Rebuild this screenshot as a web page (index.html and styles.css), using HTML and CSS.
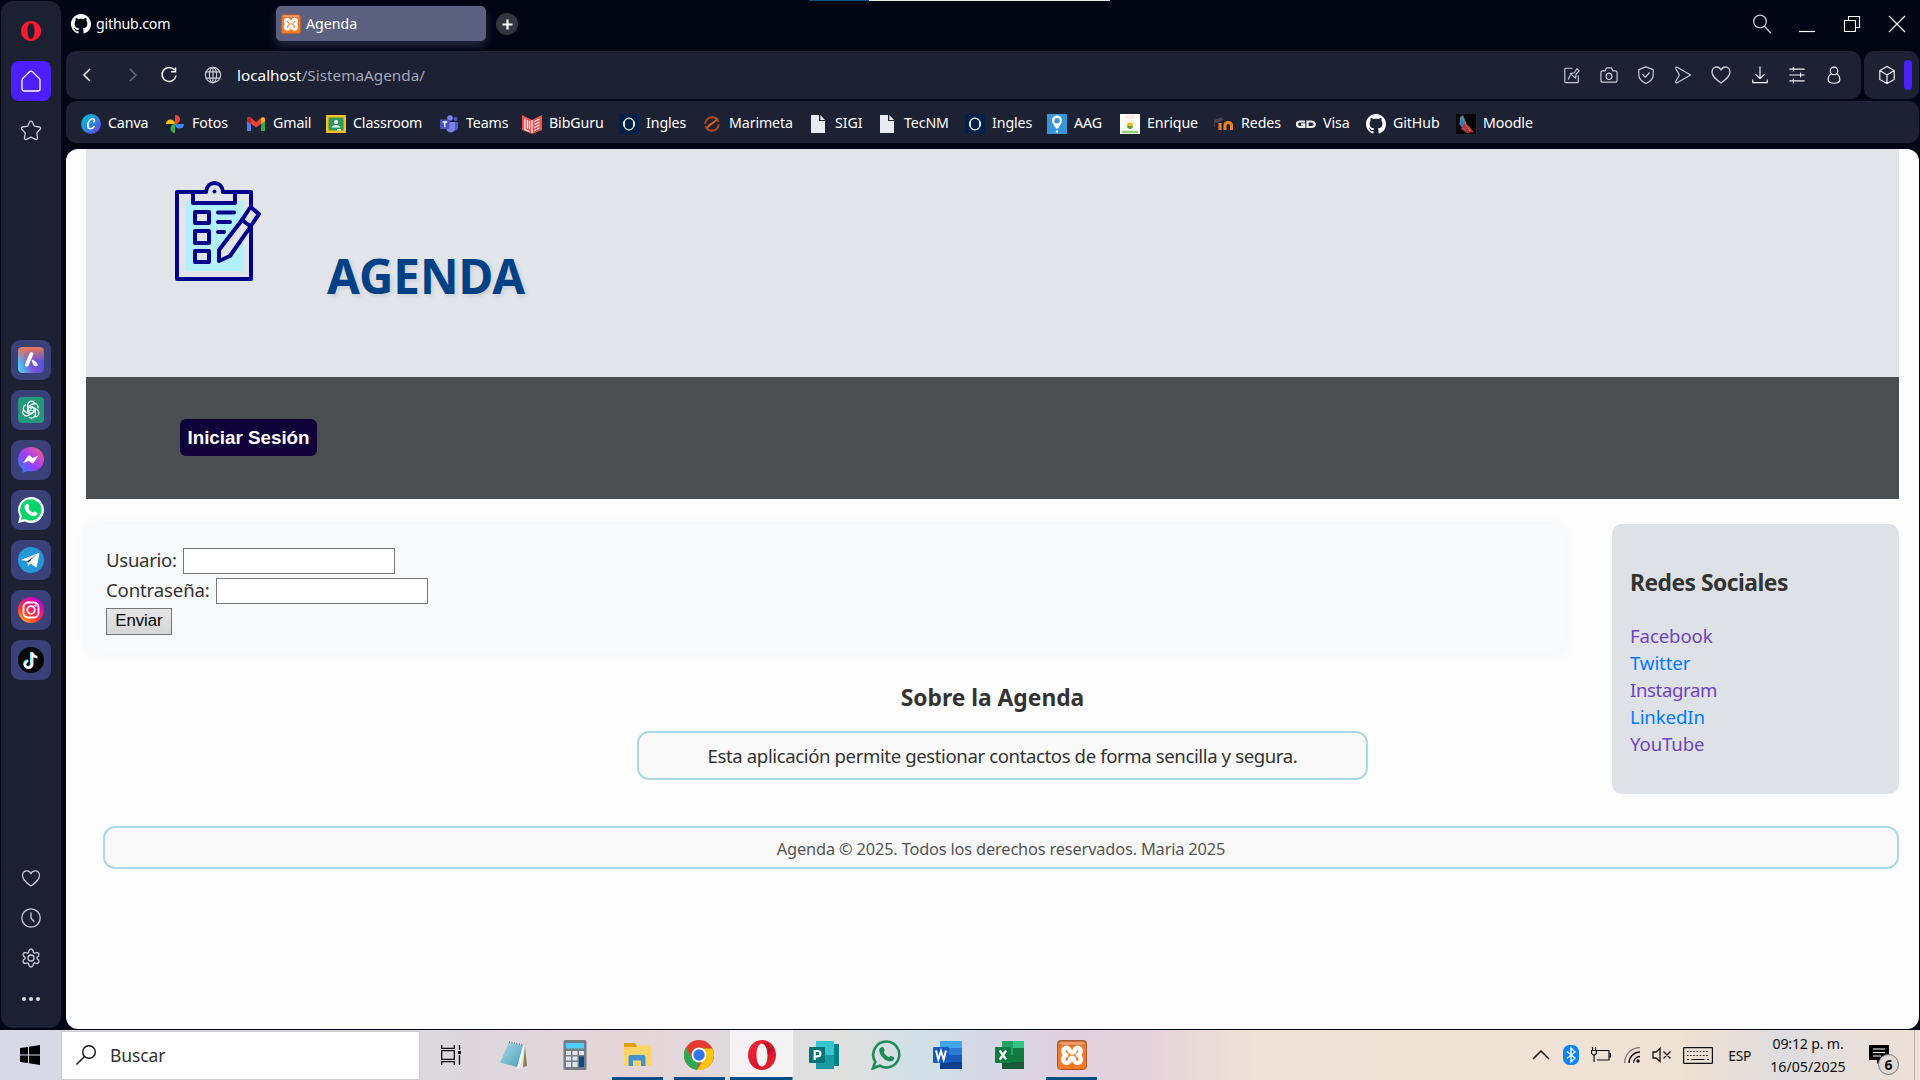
FILE: index.html
```html
<!DOCTYPE html>
<html lang="es">
<head>
<meta charset="utf-8">
<title>Agenda</title>
<link rel="stylesheet" href="styles.css">
</head>
<body>
<svg class="defs" width="0" height="0" aria-hidden="true">
  <defs>
    <linearGradient id="gCanva" x1="0" y1="0" x2="1" y2="1"><stop offset="0" stop-color="#00c4cc"/><stop offset=".5" stop-color="#2a8de0"/><stop offset="1" stop-color="#7d2ae8"/></linearGradient>
    <linearGradient id="gAria" x1="0" y1=".7" x2="1" y2=".4"><stop offset="0" stop-color="#4fd0f0"/><stop offset=".5" stop-color="#7a4fd8"/><stop offset="1" stop-color="#4a56d8"/></linearGradient>
    <linearGradient id="gAriaTop" x1="0" y1="0" x2="0" y2="1"><stop offset="0" stop-color="#ee7a50"/><stop offset=".55" stop-color="#ee7a50" stop-opacity="0"/></linearGradient>
    <linearGradient id="gMess" x1="0" y1="1" x2="1" y2="0"><stop offset="0" stop-color="#1a8cff"/><stop offset=".45" stop-color="#9a3cff"/><stop offset="1" stop-color="#ff5f80"/></linearGradient>
    <linearGradient id="gInsta" x1="0" y1="1" x2=".7" y2="0"><stop offset="0" stop-color="#ffd521"/><stop offset=".4" stop-color="#ff3d2e"/><stop offset=".7" stop-color="#f0108a"/><stop offset="1" stop-color="#b900d8"/></linearGradient>
    <linearGradient id="gOpera" x1="0" y1="0" x2="1" y2="1"><stop offset="0" stop-color="#ff2a3c"/><stop offset=".6" stop-color="#d3122a"/><stop offset="1" stop-color="#f0303c"/></linearGradient>
    <linearGradient id="gXampp" x1="0" y1="0" x2="0" y2="1"><stop offset="0" stop-color="#b9602a"/><stop offset=".25" stop-color="#f07c2c"/><stop offset="1" stop-color="#fb7a24"/></linearGradient>
    <linearGradient id="gNote" x1="0" y1="0" x2="1" y2="1"><stop offset="0" stop-color="#a9dbe8"/><stop offset="1" stop-color="#4a9db8"/></linearGradient>
    <symbol id="github" viewBox="0 0 16 16"><path fill="#fff" d="M8 0C3.58 0 0 3.58 0 8c0 3.54 2.29 6.53 5.47 7.59.4.07.55-.17.55-.38 0-.19-.01-.82-.01-1.49-2.01.37-2.53-.49-2.69-.94-.09-.23-.48-.94-.82-1.13-.28-.15-.68-.52-.01-.53.63-.01 1.08.58 1.23.82.72 1.21 1.87.87 2.33.66.07-.52.28-.87.51-1.07-1.78-.2-3.64-.89-3.64-3.95 0-.87.31-1.59.82-2.15-.08-.2-.36-1.02.08-2.12 0 0 .67-.21 2.2.82.64-.18 1.32-.27 2-.27s1.36.09 2 .27c1.53-1.04 2.2-.82 2.2-.82.44 1.1.16 1.92.08 2.12.51.56.82 1.27.82 2.15 0 3.07-1.87 3.75-3.65 3.95.29.25.54.73.54 1.48 0 1.07-.01 1.93-.01 2.2 0 .21.15.46.55.38A8.01 8.01 0 0 0 16 8c0-4.42-3.58-8-8-8z"/></symbol>
    <symbol id="xampp" viewBox="0 0 30 30"><rect x=".5" y=".5" width="29" height="29" rx="3" fill="url(#gXampp)" stroke="#a85a2c"/><rect x="2.5" y="1.8" width="25" height="3" rx="1.5" fill="#f6b48c" opacity=".7"/><path fill="none" stroke="#fff" stroke-width="4.400" stroke-linejoin="round" stroke-linecap="round" d="M12.500 10.500C12 8 9.500 7.200 7.800 8.400 5.600 10 6 13.600 9.200 15 5.800 16.400 5.400 20.600 7.600 22.200c2 1.400 4.600.6 5.400-1.800l.4-2q1.600-1.400 3.200 0l.4 2c.8 2.400 3.400 3.200 5.400 1.800 2.200-1.600 1.800-5.800-1.600-7.200 3.200-1.400 3.600-5 1.400-6.600-1.700-1.200-4.200-.4-4.700 2.100l-.3 1.300q-1.800 1.400-3.600 0z"/></symbol>
    <symbol id="heart" viewBox="0 0 20 20"><path d="M10 18C4 13.500 1 10.800 1 6.900 1 4 3 2 5.500 2 7.500 2 9.200 3.200 10 5c.8-1.800 2.500-3 4.500-3C17 2 19 4 19 6.900c0 3.900-3 6.600-9 11.100z"/></symbol>
    <symbol id="oxford" viewBox="0 0 20 20"><rect width="20" height="20" fill="#002147"/><ellipse cx="10" cy="10" rx="5.300" ry="5.900" fill="none" stroke="#fff" stroke-width="1.100"/><path d="M5.100 7.500v5M14.900 7.500v5" stroke="#fff" stroke-width="1.400"/></symbol>
    <symbol id="file" viewBox="0 0 20 20"><path fill="#e8ebf0" d="M3 1h8v6h6v12H3zM12.300 1 17 6h-4.700z"/></symbol>
  </defs>
</svg>

<div class="browser">
  <nav class="rail">
    <a class="cell"><svg width="20" height="22" viewBox="0 0 20 22"><path fill="#ff1b2d" fill-rule="evenodd" d="M10 1C4.500 1 0 5.500 0 11s4.500 10 10 10 10-4.500 10-10S15.500 1 10 1zm0 2.200c2.300 0 3.600 3.500 3.600 7.800s-1.300 7.800-3.600 7.800S6.400 15.300 6.400 11 7.700 3.200 10 3.200z"/></svg></a>
    <a class="cell home"><svg class="line" width="20" height="22" viewBox="0 0 20 22"><path d="M1 10.500c0-1 .4-1.800 1-2.400L8.500 1.700c.9-.9 2.100-.9 3 0L18 8.100c.6.6 1 1.400 1 2.400V19c0 1-.8 2-2 2H3c-1.200 0-2-1-2-2z"/></svg></a>
    <a class="cell star"><svg class="line" width="22" height="22" viewBox="0 0 22 22"><path d="M9.800 1.800c.5-1 1.900-1 2.400 0l2.200 4.400 5 .8c1.200.2 1.600 1.500.8 2.300l-3.400 3.600.7 5c.2 1.200-1 2-2 1.500L11 17.200l-4.500 2.200c-1 .5-2.200-.3-2-1.500l.7-5L1.800 9.300C1 8.500 1.400 7.200 2.600 7l5-.8z"/></svg></a>
    <div class="apps">
      <a class="cell tile"><svg width="26" height="26" viewBox="0 0 26 26"><rect width="26" height="26" rx="4.500" fill="url(#gAria)"/><rect width="26" height="26" rx="4.500" fill="url(#gAriaTop)"/><path fill="#fff" d="M12 5.500c1.500-.8 3.400-.2 3.400 1.500L10.600 18.300c-.8 2.200-4.600 1.200-3.600-1.300zM13.500 12.500c3 .3 5.800 3 6.300 6-2 1.500-4 .8-4.800-1.200z"/></svg></a>
      <a class="cell tile"><svg width="26" height="26" viewBox="0 0 26 26"><rect width="26" height="26" rx="4" fill="#22997b"/><g fill="none" stroke="#fff" stroke-width="1.200"><g id="petal"><path d="M9.700 15V8.300c0-4.600 5.600-5.300 7.100-2M10.200 9.600l4.200-2.500c3-1.600 6.300.8 5.700 4.300M13 9.300V12.800"/></g><use href="#petal" transform="rotate(120 13 13)"/><use href="#petal" transform="rotate(240 13 13)"/><path d="m13 9.600 3 1.700v3.400l-3 1.700-3-1.700v-3.400z"/></g></svg></a>
      <a class="cell tile"><svg width="26" height="26" viewBox="0 0 26 26"><path fill="url(#gMess)" d="M13 0c7.300 0 13 5.300 13 12.300S20.300 24.600 13 24.600c-1.300 0-2.600-.2-3.700-.5L4.500 26v-4C1.700 19.800 0 16.300 0 12.300 0 5.300 5.700 0 13 0z"/><path fill="#fff" d="m5 16 4.800-6.700c.7-.8 1.600-.9 2.400-.3l2.600 2 5.800-2.400-4.700 6.900c-.7.900-1.600 1-2.400.4l-2.600-2z"/></svg></a>
      <a class="cell tile"><svg width="26" height="26" viewBox="0 0 26 26"><path fill="#fff" d="M13 0a13 13 0 1 1-6.300 24.400L0 26l1.700-6.600A13 13 0 0 1 13 0z"/><path fill="#08d46c" d="M13 2.200A10.700 10.700 0 0 0 4 19l-1 4 4-1.100A10.700 10.700 0 1 0 13 2.200z"/><path fill="#fff" d="M8 7.500c1-1.200 2-1 2.500.2l.8 1.900c.3.700-.9 1.500-.7 2 1 1.900 2.300 3.200 4.200 4 .6.200 1.300-1.400 1.900-1.100l2.300 1.200c1.100.6-.4 3.500-3.200 3.500-4.500-.2-9.700-5.600-9.200-9.800.1-.8.800-1.400 1.400-1.900z"/></svg></a>
      <a class="cell tile"><svg width="26" height="26" viewBox="0 0 26 26"><circle cx="13" cy="13" r="13" fill="#2497d8"/><path fill="#fff" d="M3 13 20.500 6.100c.7-.2 1 .2.900.9l-2.600 12.500c-.2.900-.9 1-1.600.5l-4.700-3.500-2.500 2.600-1-5z"/><path stroke="#b8d8ea" d="m9 14 9-6-7.500 8"/></svg></a>
      <a class="cell tile"><svg width="26" height="26" viewBox="0 0 26 26"><circle cx="13" cy="13" r="13" fill="url(#gInsta)"/><g fill="none" stroke="#fff" stroke-width="1.800"><rect x="5.500" y="5.500" width="15" height="15" rx="4.500"/><circle cx="13" cy="13" r="3.800"/></g><circle cx="17.300" cy="8.700" r="1.100" fill="#fff"/></svg></a>
      <a class="cell tile"><svg width="26" height="26" viewBox="0 0 26 26"><circle cx="13" cy="13" r="13" fill="#05060a"/><g fill="none" stroke-width="2.500"><path stroke="#25f4ee" d="M13.200 5v12a3.400 3.400 0 1 1-3.500-3.500"/><path stroke="#fe2c55" d="M14.600 6.200v12a3.400 3.400 0 0 1-5 2M15 6c.5 2.700 2 4.200 5 4.600"/><path stroke="#fff" d="M13.900 5.500v12a3.400 3.400 0 1 1-3.500-3.500M14 5.500c.5 2.700 2 4.200 5 4.600"/></g></svg></a>
    </div>
    <div class="tools">
      <a class="cell"><svg class="line" width="20" height="19" viewBox="0 0 20 20"><use href="#heart"/></svg></a>
      <a class="cell"><svg class="line" width="20" height="20" viewBox="0 0 20 20"><circle cx="10" cy="10" r="9.200"/><path d="M10 5v5l3 3.500"/></svg></a>
      <a class="cell"><svg class="line" width="20" height="20" viewBox="0 0 20 20"><path d="M8 2.400Q10-.4 12 2.400l.4 2.100 1.200.7 2-.7q3.300.4 2 3.400L16 9.300v1.400l1.600 1.400q1.300 3-2 3.400l-2-.7-1.200.7-.4 2.100q-2 2.800-4 0l-.4-2.100-1.200-.7-2 .7q-3.300-.4-2-3.400L4 10.700V9.300L2.400 7.900q-1.300-3 2-3.400l2 .7 1.200-.7z"/><circle cx="10" cy="10" r="3"/></svg></a>
      <a class="cell dots"><svg width="20" height="6" viewBox="0 0 20 6" fill="#d5d8e0"><circle cx="3" cy="3" r="2.100"/><circle cx="10" cy="3" r="2.100"/><circle cx="17" cy="3" r="2.100"/></svg></a>
    </div>
  </nav>

  <div class="main">
    <div class="tabs">
      <div class="tab"><svg width="20" height="20"><use href="#github"/></svg><span class="label">github.com</span></div>
      <div class="tab active"><svg width="20" height="20"><use href="#xampp"/></svg><span>Agenda</span></div>
      <div class="plus"><svg width="11" height="11" viewBox="0 0 11 11"><path d="M5.500.5v10M.5 5.500h10" stroke="#fff" stroke-width="2.200"/></svg></div>
      <div class="window">
        <svg class="line" width="20" height="20" viewBox="0 0 20 20"><circle cx="8" cy="7.500" r="6.300"/><path d="m12.300 12.200 6.200 6.500"/></svg>
        <svg width="20" height="20" viewBox="0 0 20 20"><path d="M2 17.500h16" stroke="#fff" stroke-width="1.200"/></svg>
        <svg width="20" height="20" viewBox="0 0 20 20" fill="none" stroke="#fff" stroke-width="1.100"><path d="M2.500 6.500h11v11h-11zM6.500 6.500v-4h11v11h-4"/></svg>
        <svg width="20" height="20" viewBox="0 0 20 20"><path d="m2 2 16 16M18 2 2 18" stroke="#fff" stroke-width="1.200"/></svg>
      </div>
    </div>

    <div class="bar">
      <div class="address">
        <div class="nav">
          <svg width="20" height="20" viewBox="0 0 20 20" fill="none" stroke="#fff" stroke-width="1.500"><path d="m13 4-6 6 6 6"/></svg>
          <svg width="20" height="20" viewBox="0 0 20 20" fill="none" stroke="#666a7a" stroke-width="1.500"><path d="m7 4 6 6-6 6"/></svg>
          <svg width="20" height="20" viewBox="0 0 20 20" fill="none" stroke="#fff" stroke-width="1.500"><path d="M15.500 5A7 7 0 1 0 17 10.500M16.500 2.500v4.300h-4.300"/></svg>
          <svg class="line" width="18" height="18" viewBox="0 0 20 20"><circle cx="10" cy="10" r="8.500"/><ellipse cx="10" cy="10" rx="4" ry="8.500"/><path d="M2.500 6.500h15M2.500 13.500h15M10 1.500v17"/></svg>
        </div>
        <span class="url"><b>localhost</b>/SistemaAgenda/</span>
        <div class="actions">
          <svg class="line" width="18" height="18" viewBox="0 0 20 20"><path d="M10 2.500H3q-1 0-1 1v14q0 1 1 1h13q1 0 1-1V11M6 14.500l2-4M8 8.500l4.500-1 3-4.500 2.500 2.500-3.500 3.500-.5 4.500zM12 3"/></svg>
          <svg class="line" width="18" height="18" viewBox="0 0 20 20"><path d="M3 5.500h2.500l2-3.500h5l2 3.500H17q2 0 2 2v8q0 2.500-2 2.500H3q-2 0-2-2.500v-8q0-2 2-2z"/><ellipse cx="10" cy="11.500" rx="3.200" ry="3.500"/></svg>
          <svg class="line" width="18" height="18" viewBox="0 0 20 20"><path d="m10 1 8 3v6c0 4.500-3.500 7.500-8 9.500-4.500-2-8-5-8-9.500V4z"/><path d="m6.500 9.500 2.700 3 4.500-5"/></svg>
          <svg class="line" width="18" height="18" viewBox="0 0 20 20"><path d="M3.500 1.500 18.500 10l-15 8.500c-1.500.8-2-.5-1.500-1.500L6 10 2 3c-.5-1 .3-2.200 1.500-1.500z"/></svg>
          <svg class="line" width="20" height="20" viewBox="0 0 20 20"><use href="#heart"/></svg>
          <svg class="line bright" width="18" height="18" viewBox="0 0 20 20"><path d="M10 1v13M5.500 9.500 10 14l4.500-4.500M2 15.500v3h16v-3"/></svg>
          <svg class="line bright" width="18" height="18" viewBox="0 0 20 20"><path d="M2 3.500h16M2 10h16M2 16.500h16M6 1.500v4M14 8v4M6 14.500v4"/></svg>
          <svg class="line bright" width="18" height="18" viewBox="0 0 20 20"><circle cx="10" cy="5.500" r="4.200"/><path d="M7.300 8.700C4.700 10 3.500 12 3.500 15c0 5.500 13 5.500 13 0 0-3-1.200-5-3.800-6.300"/></svg>
        </div>
      </div>
      <div class="panel">
        <svg class="line bright" width="18" height="20" viewBox="0 0 20 22"><path d="M10 1.500 18 6v10l-8 4.500L2 16V6zM2 6l8 5 8-5M10 11v9.500"/></svg>
        <i></i>
      </div>
    </div>

    <div class="bookmarks">
      <a><svg width="20" height="20" viewBox="0 0 20 20"><circle cx="10" cy="10" r="10" fill="url(#gCanva)"/><path fill="none" stroke="#fff" stroke-width="1.600" stroke-linecap="round" d="M12.800 8c1-1.300.6-3.200-1.200-3.200-2.600 0-4.800 3.400-4.800 6.400 0 2.300 1 3.600 2.700 3.600 1.500 0 2.800-.9 3.700-2.300"/></svg><span>Canva</span></a>
      <a><svg width="20" height="20" viewBox="0 0 20 20"><path fill="#ea4335" d="M10 10V1c3 0 5 2 5 4.500S13 10 10 10z"/><path fill="#4285f4" d="M10 10h9c0 3-2 4.500-4.500 4.500S10 13 10 10z"/><path fill="#34a853" d="M10 10v9c-3 0-4.500-2-4.500-4.500S7 10 10 10z"/><path fill="#fbbc04" d="M10 10H1c0-3 2-4.500 4.500-4.500S10 7 10 10z"/></svg><span>Fotos</span></a>
      <a><svg width="20" height="20" viewBox="0 0 20 20"><path fill="#4285f4" d="M1 5v12h4V8z"/><path fill="#34a853" d="M15 8v9h4V5z"/><path fill="#ea4335" d="M1 5c0-2 2-2.500 3.500-1.500L10 8l5.500-4.500C17 2.500 19 3 19 5v2l-9 6.500L1 7z"/><path fill="#fbbc04" d="M15 4.500c2-2 4-.5 4 1V7l-4 3z"/><path fill="#c5221f" d="M5 4.500C3 2.500 1 4 1 5.500V7l4 3z"/></svg><span>Gmail</span></a>
      <a><svg width="20" height="20" viewBox="0 0 20 20"><rect y="1" width="20" height="18" rx="1" fill="#f7bc1b"/><rect x="2.500" y="3.500" width="15" height="13" fill="#2b9a5c"/><circle cx="10" cy="8" r="2" fill="#fff"/><path fill="#fff" d="M5.500 13.500c1-3.500 8-3.500 9 0zM11 15h4v1.500h-4z"/></svg><span>Classroom</span></a>
      <a><svg width="20" height="20" viewBox="0 0 20 20"><circle cx="16.500" cy="5" r="2" fill="#5059c9"/><circle cx="11" cy="4" r="2.800" fill="#7b83eb"/><path fill="#5059c9" d="M13 8h6v5c0 3-2 4-4 3.500z"/><path fill="#7b83eb" d="M7 8h9v6c0 6-8 6-9 0z"/><rect x="1" y="5.500" width="9.500" height="9.500" rx="1" fill="#4b53bc"/><path stroke="#fff" stroke-width="1.300" d="M3.500 8h4.600M5.800 8v5"/></svg><span>Teams</span></a>
      <a><svg width="20" height="20" viewBox="0 0 20 20"><path fill="#f0504e" d="m0 1 10 5 10-5v15l-10 4-10-4z"/><path stroke="#fff" stroke-width="1.200" fill="none" d="M3 4.500v11l4.500 2M5.500 6v8.500M7.500 7v8M10 6v13M12.500 7.500l5-2.500M12.500 10.500l5-2.500M12.500 13.500l5-2.500M12.500 16.500l5-2.500"/></svg><span>BibGuru</span></a>
      <a><svg width="20" height="20"><use href="#oxford"/></svg><span>Ingles</span></a>
      <a><svg width="20" height="20" viewBox="0 0 20 20"><circle cx="10" cy="10" r="6.800" fill="none" stroke="#a8481c" stroke-width="2" stroke-dasharray="19 2.300"/><path fill="#e0601c" d="M5 15.500c0-3 .5-4.500 3-6l4-2.500 4-3.500c-1 3-2 5-5 6.500l-3 2z"/></svg><span>Marimeta</span></a>
      <a><svg width="20" height="20"><use href="#file"/></svg><span>SIGI</span></a>
      <a><svg width="20" height="20"><use href="#file"/></svg><span>TecNM</span></a>
      <a><svg width="20" height="20"><use href="#oxford"/></svg><span>Ingles</span></a>
      <a><svg width="20" height="20" viewBox="0 0 20 20"><rect width="20" height="20" fill="#3596d8"/><path fill="#fff" fill-rule="evenodd" d="M10 1.500c3 0 5 2.200 5 5 0 3-2.600 5-4 8H9c-1.400-3-4-5-4-8 0-2.800 2-5 5-5zm0 2.500a2.700 2.700 0 1 0 0 5.400A2.700 2.700 0 0 0 10 4z"/><circle cx="10" cy="17.500" r="1.200" fill="#fff"/></svg><span>AAG</span></a>
      <a><svg width="20" height="20" viewBox="0 0 20 20"><rect width="20" height="20" fill="#fff"/><path stroke="#fbe4e1" stroke-width="1.500" d="M5 2h10M6 4h8"/><path stroke="#bfe3a0" stroke-dasharray="1 1" fill="none" d="M4 13a6 6 0 0 1 12 0"/><circle cx="10" cy="11.500" r="3" fill="#f4b81c"/><path fill="#5aa53a" d="M7 12h6q-.5 3-3 3t-3-3z"/><path stroke="#8fd070" stroke-width="2.500" d="M2 18h16"/></svg><span>Enrique</span></a>
      <a><svg width="20" height="20" viewBox="0 0 20 20"><path fill="none" stroke="#e8802a" stroke-width="3" d="M6 16V9M11 16v-4.500c0-4 6.500-4 6.500 0V16"/><path fill="#4a4347" d="m0 6 7-2.500 3 2-5 2.500-4 1v4H0z"/></svg><span>Redes</span></a>
      <a><svg width="20" height="20" viewBox="0 0 20 20"><path fill="none" stroke="#eee" stroke-width="2.200" d="M9 7.500H4C1.500 7.500 1 9 1 10.200S1.500 13 4 13h4.200v-2.600H5M11.500 7.500v5.500H15c5 0 5-5.500 0-5.500z"/></svg><span>Visa</span></a>
      <a><svg width="20" height="20"><use href="#github"/></svg><span>GitHub</span></a>
      <a><svg width="20" height="20" viewBox="0 0 20 20"><rect width="20" height="20" fill="#050508"/><path fill="#2a86b8" d="m4 3 3-2 3 7-1 8-5-5z"/><path fill="#b0343c" d="m8 9 5 3 5 6-7 1-6-4z"/><path stroke="#e87a3c" d="m6 3 3 6 5 8"/><path stroke="#8a5ab8" d="m3 9 6 7"/></svg><span>Moodle</span></a>
    </div>

    <div class="page">
      <header class="masthead">
        <svg width="88" height="102" viewBox="0 0 88 102">
          <path fill="#b2f0fb" d="M11 20h57v70H11z"/>
          <g stroke="#00008b" stroke-width="4" stroke-linejoin="round" stroke-linecap="round">
            <path fill="none" d="M18 11H2v87h74V46M76 26V11H60"/>
            <path fill="#e1e5ea" d="M18 11h13c1-12 16-12 17 0h12v11H18z"/>
            <path fill="#e1e5ea" d="M20 31h14v11H20zM20 50h14v12H20zM20 70h14v11H20z"/>
            <path fill="none" d="M43 31.500h16M43 41h12M43 51h6"/>
            <path fill="#e1e5ea" d="m75.500 26 8.500 7-9.500 14-19.500 28-11 5V69l23-30z"/>
            <path fill="none" d="m67 39 8 6"/>
          </g>
          <circle cx="39.500" cy="10.500" r="2" fill="#00008b"/>
        </svg>
        <h1>AGENDA</h1>
      </header>
      <div class="menu"><a class="login">Iniciar Sesión</a></div>
      <div class="content">
        <div class="left">
          <form class="card">
            <label><span class="user">Usuario:</span><input type="text"></label>
            <label><span class="pass">Contraseña:</span><input type="password"></label>
            <button type="button">Enviar</button>
          </form>
          <section class="about">
            <h3>Sobre la Agenda</h3>
            <p>Esta aplicación permite gestionar contactos de forma sencilla y segura.</p>
          </section>
        </div>
        <aside class="social">
          <h3>Redes Sociales</h3>
          <a class="seen">Facebook</a>
          <a>Twitter</a>
          <a class="seen tight">Instagram</a>
          <a>LinkedIn</a>
          <a class="seen">YouTube</a>
        </aside>
      </div>
      <footer class="foot">Agenda © 2025. Todos los derechos reservados. Maria 2025</footer>
    </div>
  </div>
</div>
<div class="strip"></div>

<div class="taskbar">
  <div class="start"><svg width="20" height="20" viewBox="0 0 20 20"><path d="M0 3l8-1v7.500H0zM9 1.800 20 0v9.500H9zM0 10.500h8V18l-8-1zM9 10.500h11V20L9 18.200z"/></svg></div>
  <div class="search"><svg width="20" height="20" viewBox="0 0 20 20" fill="none" stroke="#111" stroke-width="1.400"><circle cx="13" cy="7" r="6.300"/><path d="M8.500 11.500.5 19.500"/></svg><span>Buscar</span></div>
  <div class="tasks">
    <a><svg width="20" height="20" viewBox="0 0 20 20" fill="none" stroke="#111" stroke-width="1.300"><path d="M.7 0v3.300h12.600V0M.7 5.700h12.600v8.600H.7zM.7 20v-3.300h12.600V20M18.500 0v5M18.500 10v10"/><path fill="#111" stroke="none" d="M17 6h3v3h-3z"/></svg></a>
    <a><svg width="30" height="30" viewBox="0 0 30 30"><path fill="#e8e2c8" d="m24 5 5 20-6 3z"/><path fill="#8b8058" d="m27 6 2 20-4 1z"/><path fill="#f2f5f6" d="m12 2 15 3-5 23-3 .5z"/><path fill="url(#gNote)" d="M11 2.500 25 5.500 19 27 2 22.500z"/><path stroke="#5b6a70" stroke-width="1.500" stroke-dasharray="1 1.500" d="m11 2 15 3"/></svg></a>
    <a><svg width="30" height="30" viewBox="0 0 30 30"><rect x="3.500" width="23" height="30" rx="1.500" fill="#747d86"/><path fill="#4fd0fb" d="M6 3h18v5.500H6z"/><path fill="#dfe5ea" d="M6 11h5v4H6zM12.500 11h5v4h-5zM19 11h5v4h-5zM6 16.500h5v4H6zM12.500 16.500h5v4h-5zM6 22h5v5H6zM12.500 22h5v5h-5z"/><path fill="#0b4a86" d="M19 16.500h5V27h-5z"/></svg></a>
    <a class="open"><svg width="30" height="30" viewBox="0 0 30 30"><path fill="#e0a106" d="M2 3h11l2 3v4H2z"/><path fill="#fed566" d="M2 7h12l2-1.500h13V26H2z"/><path fill="#3f93d2" d="M6.500 17q0-2 2-2h13q2 0 2 2v9h-4.500v-5.500h-8V26H6.500z"/></svg></a>
    <a class="open"><svg width="30" height="30" viewBox="0 0 30 30"><circle cx="15" cy="15" r="15" fill="#e33b2e"/><path fill="#2da94f" d="M2 7.500 8.700 19.500 15 22l-2 8A15 15 0 0 1 2 7.500z"/><path fill="#fdc60e" d="M28.300 8.500A15 15 0 0 1 13 30l7.500-12.500L18 8.500z"/><circle cx="15" cy="15" r="7.500" fill="#fff"/><circle cx="15" cy="15" r="5.700" fill="#2f76ea"/></svg></a>
    <a class="open current"><svg width="30" height="30" viewBox="0 0 30 30"><path fill="url(#gOpera)" fill-rule="evenodd" d="M15 0C7 0 1 6.700 1 15s6 15 14 15 14-6.700 14-15S23 0 15 0zm0 3.500c3.500 0 5.500 5 5.500 11.500s-2 11.500-5.500 11.500S9.500 21.500 9.500 15 11.500 3.500 15 3.500z"/><path fill="#a80718" d="M14 3.600c4-2.600 9 .2 11 4L20.500 15c0-6-2-11.500-6.500-11.400z" opacity=".6"/></svg></a>
    <a><svg width="30" height="30" viewBox="0 0 30 30"><path fill="#038387" d="M16 4h14v22H16z"/><path fill="#37c6d0" d="M7 1h18v14H7z"/><path fill="#1a9ba1" d="M7 15h18v14H7z"/><rect x="0" y="7" width="16" height="16" rx="1" fill="#04737a"/><path fill="none" stroke="#fff" stroke-width="2.200" d="M5.700 20v-9h3c3.600 0 3.600 5.300 0 5.300h-3"/></svg></a>
    <a><svg width="30" height="30" viewBox="0 0 30 30"><path fill="none" stroke="#1f8b5a" stroke-width="2.600" d="M15.500 1.500a13 13 0 1 1-6.800 24.200L2 28.300l2.300-6.500A13.200 13.200 0 0 1 15.500 1.500z"/><path fill="#1f8b5a" d="M10 7.500c1-1 2.300-.8 2.800.4l.9 2.200c.3.800-1 1.800-.8 2.400 1.200 2.300 2.700 3.700 5 4.700.7.300 1.500-1.700 2.300-1.300l2.700 1.400c1.300.7-.5 4.200-3.800 4.200C13.700 21 7.900 15 8.200 9.800c.1-1 .9-1.700 1.800-2.300z"/></svg></a>
    <a><svg width="30" height="30" viewBox="0 0 30 30"><path fill="#41a5ee" d="M7 1h22v7.500H7z"/><path fill="#2b7cd3" d="M7 8h22v7H7z"/><path fill="#185abd" d="M7 15h22v7H7z"/><path fill="#103f91" d="M7 22h22v7H7z"/><rect y="7" width="16" height="16" rx="1" fill="#185abd"/><path fill="none" stroke="#fff" stroke-width="1.900" d="m3 10.500 2.300 9L8 11l2.700 8.500 2.300-9"/></svg></a>
    <a><svg width="30" height="30" viewBox="0 0 30 30"><path fill="#21a366" d="M7 1h11v14H7z"/><path fill="#33c481" d="M18 1h11v7H18z"/><path fill="#107c41" d="M18 8h11v7H18zM7 15h11v14H7z"/><path fill="#185c37" d="M7 22h22v7H7z"/><path fill="#107c41" d="M18 15h11v7H18z"/><rect y="7" width="16" height="16" rx="1" fill="#107c41"/><path stroke="#fff" stroke-width="2.200" d="m4.700 10.500 6.500 9M11.200 10.500l-6.500 9"/></svg></a>
    <a class="open"><svg width="30" height="30"><use href="#xampp"/></svg></a>
  </div>
  <div class="tray">
    <svg width="18" height="12" viewBox="0 0 18 12" fill="none" stroke="#111" stroke-width="1.500"><path d="m1 10 8-8 8 8"/></svg>
    <svg width="16" height="20" viewBox="0 0 16 20"><rect width="16" height="20" rx="6.500" fill="#0a84f8"/><path fill="none" stroke="#fff" stroke-width="1.300" d="m4 6.500 8 6.500-4 4V3l4 4-8 6.500"/></svg>
    <svg width="20" height="16" viewBox="0 0 20 16" fill="none" stroke="#111" stroke-width="1.200"><path d="M6 3.500h12v9.500H6M18 6.500h1.500V10H18M1.500 0v3M4.500 0v3M.5 3.500h5v3l-2.500 2-2.500-2zM3 8v7"/></svg>
    <svg width="16" height="16" viewBox="0 0 16 16" fill="none" stroke="#111" stroke-width="1.300"><path d="M.7 16C.7 7.500 7.500.7 16 .7" stroke="#777"/><path d="M5 16c0-6 5-11 11-11M9.500 16c0-3.600 2.900-6.500 6.500-6.500"/><circle cx="14" cy="14" r="1.700" fill="#111" stroke="none"/></svg>
    <svg width="20" height="16" viewBox="0 0 20 16" fill="none" stroke="#111" stroke-width="1.300"><path d="M1 5h3l4-3.500v13L4 11H1zM11.500 4.500l7 7M18.500 4.500l-7 7"/></svg>
    <svg width="30" height="17" viewBox="0 0 30 17" fill="none" stroke="#111" stroke-width="1.200"><rect x=".6" y=".6" width="28.800" height="15.800" rx=".5"/><path stroke-dasharray="1.500 1.700" d="M4 4.500h22M4 8.500h22"/><path d="M4 12.500h2M8.500 12.500h13M24 12.500h2"/></svg>
    <span class="lang">ESP</span>
    <div class="clock"><span class="time">09:12 p. m.</span><span>16/05/2025</span></div>
    <div class="notes"><svg width="20" height="20" viewBox="0 0 20 20"><path fill="#000" d="M0 0h20v15h-8l-4 4v-4H0z"/><path stroke="#fff" stroke-width="1.200" d="M4 4h12M4 7.500h12M4 11h8"/></svg><b>6</b></div>
  </div>
</div>
</body>
</html>
```
FILE: styles.css
```css
* { box-sizing: border-box; }
body {
  margin: 0;
  width: 1920px;
  height: 1080px;
  overflow: hidden;
  background: #020514;
  font-family: "Noto Sans", "Open Sans", sans-serif;
  display: flex;
  flex-direction: column;
}
.defs { display: block; flex: none; position: absolute; }
svg { display: block; flex: none; }
.line { fill: none; stroke: #c9ccd6; stroke-width: 1.3; stroke-linejoin: round; stroke-linecap: round; }
.bright { stroke: #f2f3f7; }

.browser { display: flex; height: 1030px; padding: 1px; }
.rail {
  width: 60px;
  height: 1027px;
  padding: 10px;
  background: #1c2033;
  border-radius: 12px;
  display: flex;
  flex-direction: column;
}
.cell { width: 40px; height: 40px; display: flex; align-items: center; justify-content: center; flex: none; }
.home { margin-top: 10px; background: #4b1fff; border-radius: 8px; }
.home svg { stroke: #fff; }
.star { margin-top: 10px; }
.apps { margin-top: 189px; display: flex; flex-direction: column; gap: 10px; }
.tile { background: #394178; border-radius: 9px; }
.tools { margin-top: auto; }
.dots { padding-top: 2px; }

.main { flex: 1; padding-left: 5px; display: flex; flex-direction: column; min-width: 0; }
.tabs { height: 50px; display: flex; align-items: flex-start; padding-top: 5px; font-size: 14.2px; color: #fff; }
.tab { width: 210px; height: 35px; display: flex; align-items: center; gap: 5px; padding-left: 5px; border-radius: 5px; }
.tab .label { letter-spacing: -.19px; }
.tab.active { background: #5b6080; box-shadow: 0 5px 8px rgba(120, 125, 160, .3); }
.plus { width: 22px; height: 22px; margin: 7px 0 0 10px; border-radius: 50%; background: #33363f; display: flex; align-items: center; justify-content: center; }
.window { margin: 8px 12px 0 auto; display: flex; gap: 25px; }

.bar { display: flex; gap: 3px; height: 48px; }
.address { width: 1795px; background: #1d2134; border-radius: 10px; display: flex; align-items: center; padding: 0 18px 0 11px; }
.nav { display: flex; align-items: center; }
.nav svg:nth-child(2) { margin-left: 26px; }
.nav svg:nth-child(3) { margin-left: 16px; }
.nav svg:nth-child(4) { margin-left: 25px; }
.url { margin-left: 15px; color: #a3a8b8; font-size: 15.3px; }
.url b { color: #fff; font-weight: 400; }
.actions { margin-left: auto; display: flex; align-items: center; gap: 19.2px; }
.panel { flex: 1; background: #1d2134; border-radius: 10px; display: flex; align-items: center; padding: 0 7px 0 14px; justify-content: space-between; }
.panel i { width: 8px; height: 30px; border-radius: 4px; background: #4b1fff; }

.bookmarks {
  margin-top: 2px;
  height: 42px;
  padding: 3px 0 0 15px;
  background: #1d2134;
  border-radius: 10px;
  display: grid;
  grid-template-columns: 84px 81px 80px 113px 83px 97px 83px 106px 69px 88px 82px 73px 94px 82px 70px 90px 90px;
  align-items: center;
  color: #fff;
  font-size: 14.2px;
  letter-spacing: -.1px;
}
.bookmarks a { display: flex; align-items: center; gap: 7px; }
.bookmarks span { line-height: 18px; margin-top: -1px; }

.page { margin-top: 6px; height: 880px; padding: 0 20px; background: #fdfdfd; border-radius: 12px; overflow: hidden; color: #333; font-size: 18.6px; }
.masthead { height: 228px; background: #e1e5ea; display: flex; align-items: flex-start; padding: 32px 0 0 89px; gap: 64px; }
h1 { margin: 65px 0 0; font-size: 47.500px; line-height: 60px; color: #004085; text-shadow: 2px 2px 4px rgba(0, 0, 0, .1); }
.menu { height: 122px; background: #4b4f52; padding: 42px 0 0 94px; }
.login { display: flex; align-items: center; justify-content: center; width: 137px; height: 37px; border-radius: 6px; background: #10003a; color: #fff; font: bold 18.800px "Liberation Sans", Arial, sans-serif; }
.content { display: flex; margin-top: 25px; justify-content: space-between; }
.left { width: 1526px; }
.card { width: 1479px; height: 130px; padding: 22px 20px; background: #f8f9fb; border-radius: 8px; box-shadow: 0 0 12px rgba(0, 0, 0, .05); }
label { display: flex; height: 30px; line-height: 27px; }
.user { width: 77px; letter-spacing: -.3px; }
.pass { width: 110px; letter-spacing: -.15px; }
input { width: 212px; height: 26px; margin: 2px 0 0; border: 1px solid #767676; background: #fff; }
.card button { display: block; width: 66px; height: 27px; margin: 2px 0 0; padding: 0 0 2px; border: 1px solid #767676; background: linear-gradient(#e6e6e6, #d6d6d6); font: 16.700px "Liberation Sans", Arial, sans-serif; color: #000; }
h3 { margin: 0; font-size: 22.800px; line-height: 34px; white-space: nowrap; }
.about { margin: 27px 0 0 287px; text-align: center; }
.about p { width: 731px; height: 49px; margin: 16px 0 0 264px; border: 2px solid #add8e6; border-radius: 12px; background: #f9f9f9; line-height: 46px; letter-spacing: -.4px; }
.social { width: 287px; height: 270px; padding: 42px 18px; background: #dee2e6; border-radius: 10px; }
.social h3 { margin-bottom: 22px; letter-spacing: -.5px; }
.social a { display: block; line-height: 27px; color: #007bff; letter-spacing: -.1px; }
.social .seen { color: #6f42c1; }
.social .tight { letter-spacing: -.38px; }
.foot { margin: 32px 0 0 17px; height: 43px; border: 2px solid #add8e6; border-radius: 12px; background: #f9f9f9; text-align: center; line-height: 41px; font-size: 16.400px; letter-spacing: -.18px; color: #555; }

.strip { position: absolute; left: 809px; top: 0; width: 301px; height: 1px; background: linear-gradient(90deg, #054e7e 60px, #e6e6e6 60px); }

.taskbar {
  height: 50px;
  display: flex;
  color: #111;
  background: linear-gradient(90deg, #d8d9e6 0, #dbd8de 420px, #e4d5d8 640px, #dfdde0 780px, #dedfdd 850px, #cfe0e6 920px, #d8d7e3 1000px, #e2d0de 1080px, #e6d4da 1160px, #f0e2d6 1260px, #efe1d3 1680px, #dddcdf 1790px, #e8dfda 1850px, #ece1d6 1920px);
}
.start { width: 60px; display: flex; align-items: center; justify-content: center; }
.search { width: 359px; height: 49px; margin: 1px 0 0 1px; background: #fff; border: 1px solid #ccc; display: flex; align-items: center; gap: 14px; padding: 0 0 2px 14px; font-size: 17.500px; letter-spacing: -.1px; color: #333; }
.tasks { display: grid; grid-template-columns: repeat(11, 62.100px); }
.tasks a { display: flex; align-items: center; justify-content: center; background: linear-gradient(#054e84, #054e84) center bottom / 0 3px no-repeat; }
.tasks .open { background-size: 51px 3px; }
.tasks .current { background-color: rgba(255, 255, 255, .65); background-size: 100% 3px; }
.tray { margin-left: auto; display: flex; align-items: center; font-size: 14.2px; padding-right: 5px; }
.tray > svg:nth-child(2) { margin-left: 13px; }
.tray > svg:nth-child(3) { margin-left: 12px; }
.tray > svg:nth-child(4) { margin-left: 13px; }
.tray > svg:nth-child(5) { margin-left: 12px; }
.tray > svg:nth-child(6) { margin-left: 11px; }
.lang { margin-left: 15px; font-size: 13.800px; letter-spacing: -.3px; }
.clock { width: 114px; display: flex; flex-direction: column; align-items: center; line-height: 23px; }
.time { letter-spacing: -.2px; }
.notes { position: relative; width: 50px; height: 50px; padding: 15px 0 0 4px; border-right: 1px solid #b8b0aa; }
.notes b { position: absolute; left: 13px; top: 24px; width: 21px; height: 21px; border: 1px solid #777; border-radius: 50%; background: #ddd9d6; font-size: 14px; line-height: 19px; text-align: center; }
```
